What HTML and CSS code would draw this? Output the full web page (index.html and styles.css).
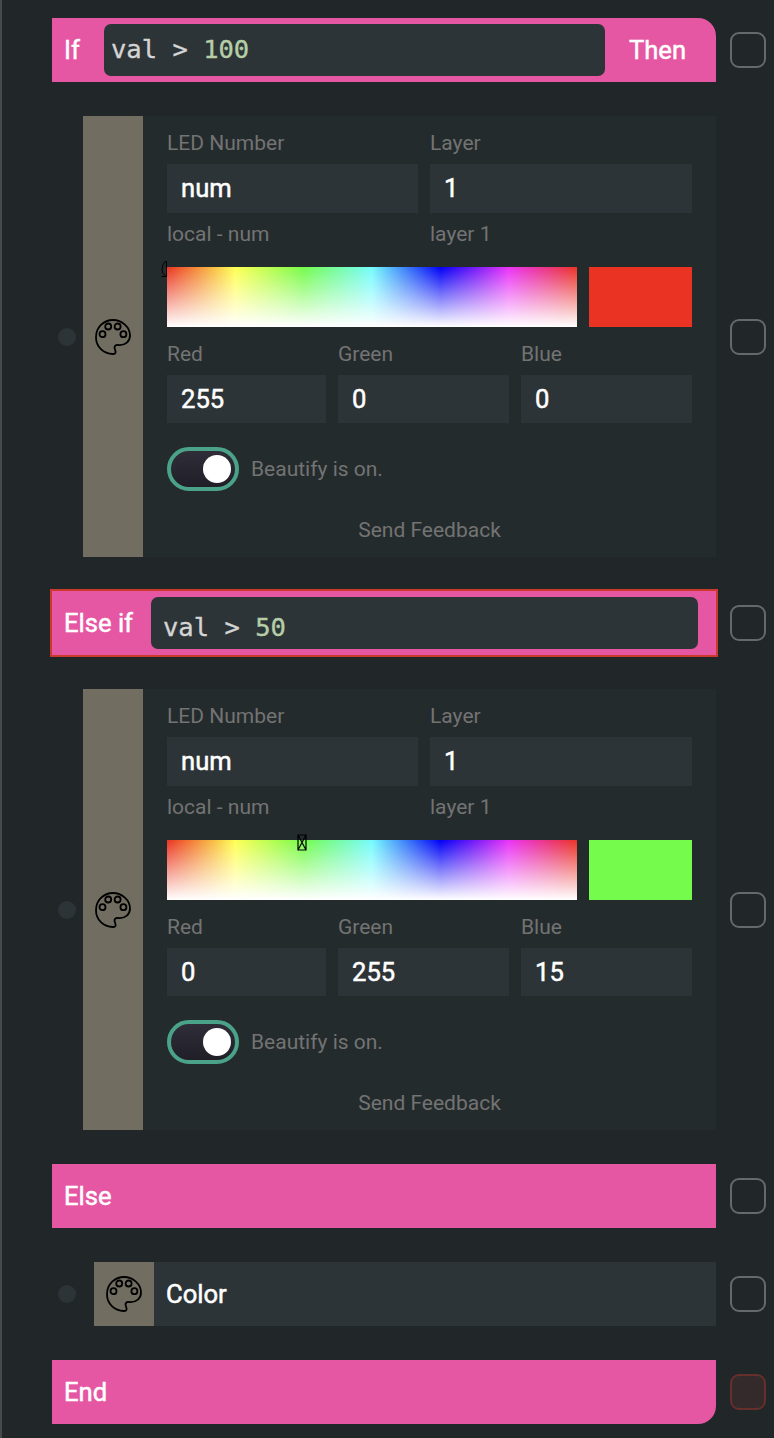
FILE: index.html
```html
<!DOCTYPE html>
<html lang="en">
<head>
<meta charset="utf-8">
<title>Block editor</title>
<link rel="stylesheet" href="styles.css">
</head>
<body>
<svg class="defs" width="0" height="0">
  <symbol id="palette" viewBox="0 0 36 36">
    <g fill="none" stroke="#000" stroke-width="1.800">
      <path d="M18 1C8.500 1 1 8.500 1 18.200S8.500 34.800 17.800 35C21 35.200 21 33 20 30.500C18.700 27.300 20.300 25.700 23.500 26C30.500 26.500 35 22.200 35 16.500C35 8 27 1 18 1Z"/>
      <circle cx="7.500" cy="15.200" r="3"/><circle cx="13.200" cy="7.500" r="3"/><circle cx="22.600" cy="7.500" r="3"/><circle cx="28.400" cy="15.200" r="3"/>
    </g>
  </symbol>
</svg>
<main class="editor">
  <div class="row">
    <div class="block block-if"><span class="word">If</span><div class="code code-if">val &gt; <span class="number">100</span></div><span class="word then">Then</span></div>
    <span class="check"></span>
  </div>

  <div class="row">
    <i class="dot"></i>
    <section class="card">
      <div class="stripe"><svg class="icon"><use href="#palette"/></svg></div>
      <div class="body">
        <div class="pair">
          <div><label class="label">LED Number</label><div class="field">num</div><div class="hint">local - num</div></div>
          <div><label class="label">Layer</label><div class="field">1</div><div class="hint">layer 1</div></div>
        </div>
        <div class="colors">
          <div class="spectrum"></div>
          <svg class="marker marker-start" viewBox="0 0 6 17"><path d="M5.500.500H4Q1 4 1 8.500T5 15.500H.500M5.500.500V16" fill="none" stroke="#000"/></svg>
          <div class="swatch red"></div>
        </div>
        <div class="rgb">
          <div><label class="label">Red</label><div class="field">255</div></div>
          <div><label class="label">Green</label><div class="field">0</div></div>
          <div><label class="label">Blue</label><div class="field">0</div></div>
        </div>
        <div class="beautify"><span class="toggle"><i class="knob"></i></span><span>Beautify is on.</span></div>
        <div class="feedback">Send Feedback</div>
      </div>
    </section>
    <span class="check"></span>
  </div>

  <div class="row">
    <div class="block selected"><span class="word">Else if</span><div class="code code-elseif">val &gt; <span class="number">50</span></div></div>
    <span class="check"></span>
  </div>

  <div class="row">
    <i class="dot"></i>
    <section class="card">
      <div class="stripe"><svg class="icon"><use href="#palette"/></svg></div>
      <div class="body">
        <div class="pair">
          <div><label class="label">LED Number</label><div class="field">num</div><div class="hint">local - num</div></div>
          <div><label class="label">Layer</label><div class="field">1</div><div class="hint">layer 1</div></div>
        </div>
        <div class="colors">
          <div class="spectrum"></div>
          <svg class="marker marker-green" viewBox="0 0 10 17"><path d="M1 1H9V16H1ZM1 1L9 16M9 1L1 16" fill="none" stroke="#000" stroke-width="1.200"/></svg>
          <div class="swatch green"></div>
        </div>
        <div class="rgb">
          <div><label class="label">Red</label><div class="field">0</div></div>
          <div><label class="label">Green</label><div class="field">255</div></div>
          <div><label class="label">Blue</label><div class="field">15</div></div>
        </div>
        <div class="beautify"><span class="toggle"><i class="knob"></i></span><span>Beautify is on.</span></div>
        <div class="feedback">Send Feedback</div>
      </div>
    </section>
    <span class="check"></span>
  </div>

  <div class="row"><div class="block"><span class="word">Else</span></div><span class="check"></span></div>

  <div class="row">
    <i class="dot"></i>
    <div class="action"><div class="stripe"><svg class="icon"><use href="#palette"/></svg></div><span class="action-name">Color</span></div>
    <span class="check"></span>
  </div>

  <div class="row"><div class="block block-end"><span class="word">End</span></div><span class="check check-error"></span></div>
</main>
</body>
</html>
```
FILE: styles.css
```css
* { box-sizing: border-box; }
body {
  margin: 0;
  background: #212628;
  color: #fff;
  font-family: Roboto, "Liberation Sans", sans-serif;
  font-size: 25.6px;
  font-weight: 400;
}
.defs { display: block; }
.editor {
  display: flex;
  flex-direction: column;
  gap: 34px;
  height: 1438px;
  padding: 18px 8px 14px 50px;
  border-left: 2px solid #484a4a;
}
.row { display: flex; align-items: center; }
.check {
  width: 36px;
  height: 36px;
  margin-left: 14px;
  border: 2px solid #646969;
  border-radius: 9px;
}
.check-error { border-color: #662f2b; background: #34292b; }
.block {
  flex: 1;
  height: 64px;
  display: flex;
  align-items: center;
  padding-left: 12px;
  background: #e557a2;
}
.block-if { padding-right: 30px; border-top-right-radius: 18px; }
.block-end { border-bottom-right-radius: 18px; }
.selected { outline: 2px solid #cb3a2b; }
.word, .field, .action-name { -webkit-text-stroke: 0.5px #fff; }
.word { line-height: 30px; white-space: nowrap; }
.then { width: 57px; margin-left: 24px; }
.code {
  height: 52px;
  margin-left: auto;
  border-radius: 7px;
  background: #2d3437;
  color: #d4d4d4;
  font: 25.5px/50px "DejaVu Sans Mono", monospace;
  white-space: pre;
  -webkit-text-stroke: 0.35px currentColor;
}
.code-if { width: 501px; padding-left: 7px; }
.code-elseif { width: 547px; margin-right: 18px; padding-left: 12px; line-height: 61px; }
.number { color: #b5cea8; }
.dot {
  width: 18px;
  height: 18px;
  margin: 0 7px 0 6px;
  border-radius: 50%;
  background: #2d3437;
}
.card { display: flex; flex: 1; height: 441px; background: #242b2d; }
.stripe {
  width: 60px;
  flex: none;
  display: flex;
  align-items: center;
  justify-content: center;
  background: #716d60;
}
.icon { width: 36px; height: 36px; }
.body { flex: 1; padding: 12px 24px 0; }
.label, .hint, .beautify, .feedback {
  color: #737373;
  font-size: 21px;
}
.label { display: block; height: 36px; line-height: 30px; }
.field {
  height: 49px;
  padding-left: 14px;
  background: #2d3437;
  line-height: 49px;
}
.hint { height: 42px; line-height: 42px; }
.pair { display: grid; grid-template-columns: 251px 262px; column-gap: 12px; }
.colors { position: relative; display: flex; gap: 12px; margin-top: 12px; }
.spectrum {
  width: 410px;
  height: 60px;
  background:
    linear-gradient(transparent, #fff),
    linear-gradient(90deg, #eb3323, #ffff55, #75fb4c, #75fbfd, #0000f5, #ea33f7, #eb3323);
}
.swatch { width: 103px; height: 60px; }
.red { background: #eb3323; }
.green { background: #75fb4c; }
.marker { position: absolute; height: 17px; }
.marker-start { top: -6px; left: -6px; width: 6px; }
.marker-green { top: -6px; left: 129.500px; width: 10px; }
.rgb { display: grid; grid-template-columns: 159px 171px 171px; column-gap: 12px; margin-top: 12px; }
.rgb .field { height: 48px; line-height: 48px; }
.beautify { display: flex; align-items: center; gap: 12px; margin-top: 24px; }
.toggle {
  width: 72px;
  height: 44px;
  display: flex;
  align-items: center;
  justify-content: flex-end;
  padding-right: 4px;
  border: 4px solid #4aa388;
  border-radius: 22px;
  background: linear-gradient(#2f2e38, #201f28);
}
.knob { width: 28px; height: 28px; border-radius: 50%; background: #fff; }
.feedback { margin-top: 24px; line-height: 30px; text-align: center; }
.action { display: flex; flex: 1; height: 64px; margin-left: 11px; background: #2d3437; }
.action-name { margin-left: 12px; line-height: 64px; }
```
